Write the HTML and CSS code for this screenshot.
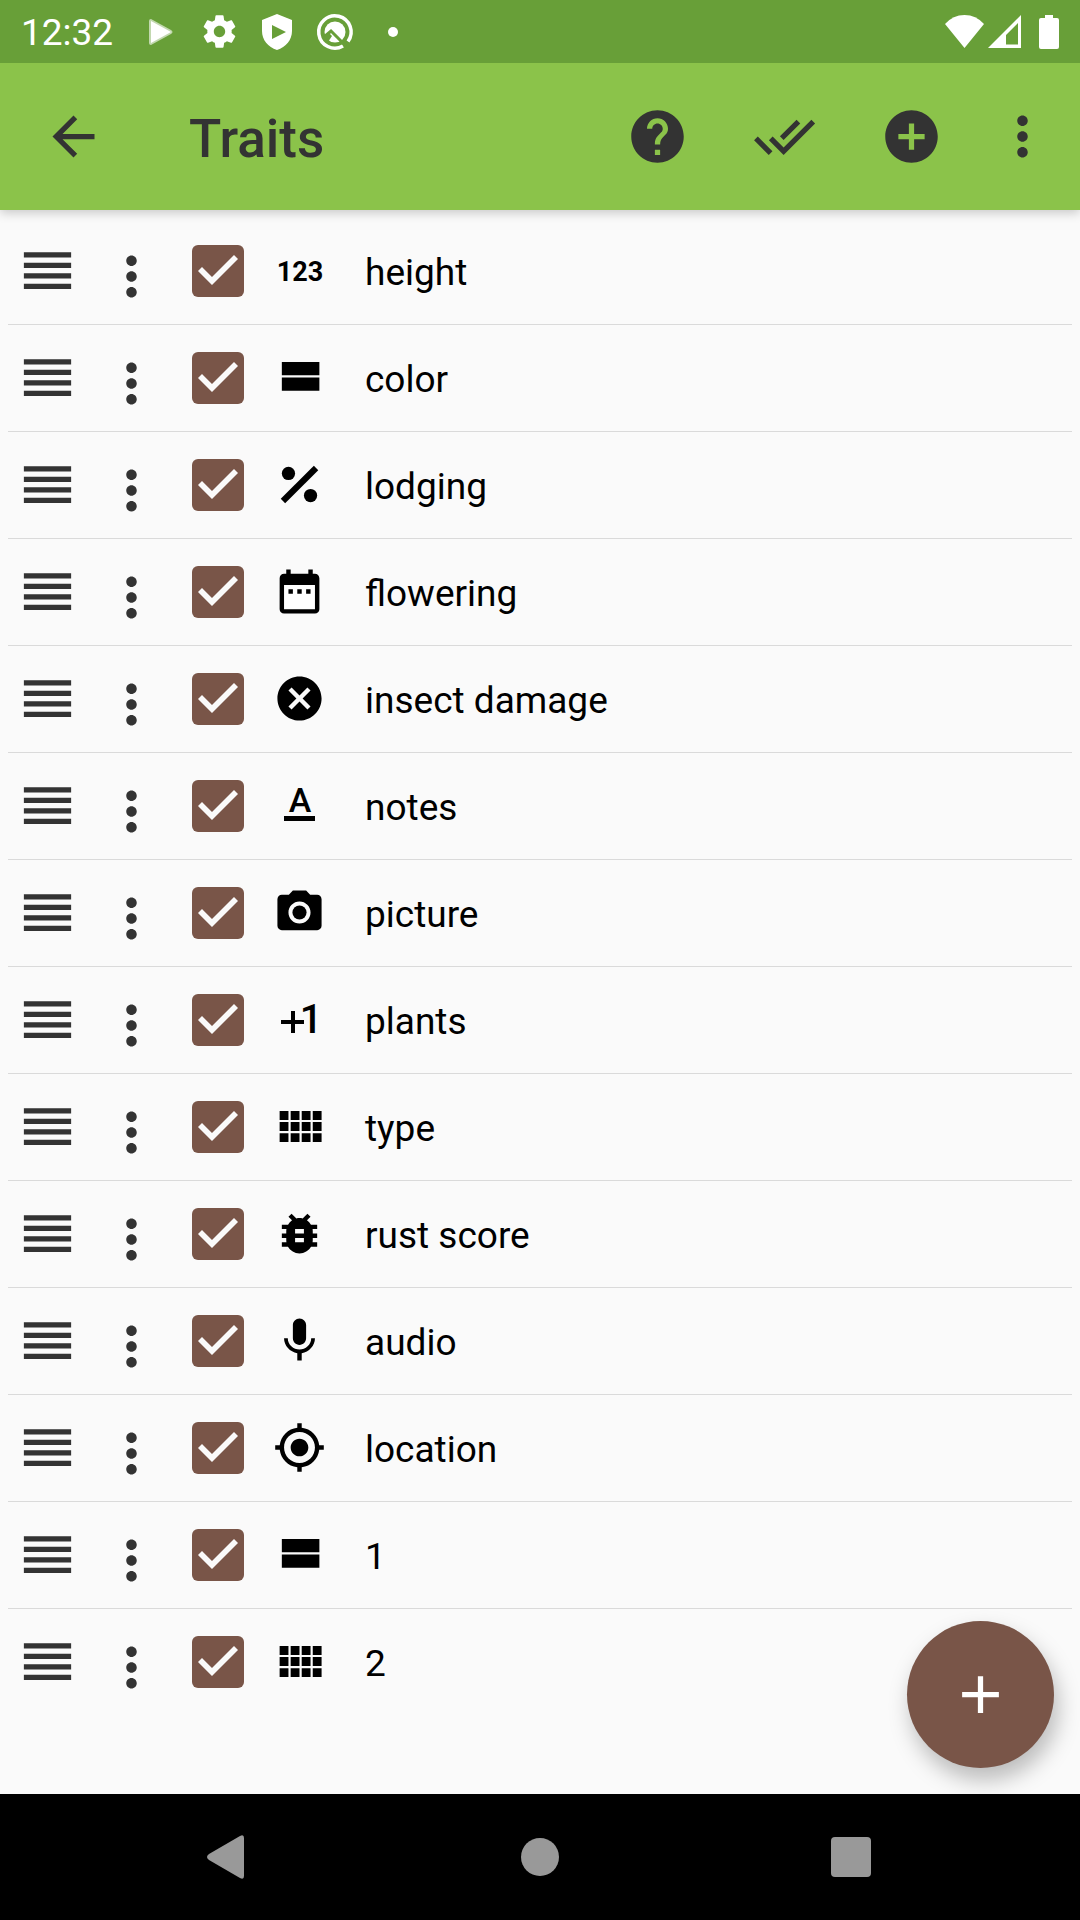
FILE: index.html
```html
<!DOCTYPE html>
<html lang="en">
<head>
<meta charset="utf-8">
<meta name="viewport" content="width=device-width, initial-scale=1">
<title>Traits</title>
<link rel="stylesheet" href="styles.css">
</head>
<body>
<svg class="sprite" aria-hidden="true">
  <symbol id="handle" viewBox="0 0 24 24"><path d="M3 15h18v-2H3v2zm0 4h18v-2H3v2zm0-8h18V9H3v2zm0-6v2h18V5H3z"/></symbol>
  <symbol id="more" viewBox="0 0 24 24"><path d="M12 8c1.1 0 2-.9 2-2s-.9-2-2-2-2 .9-2 2 .9 2 2 2zm0 2c-1.1 0-2 .9-2 2s.9 2 2 2 2-.9 2-2-.9-2-2-2zm0 6c-1.1 0-2 .9-2 2s.9 2 2 2 2-.9 2-2-.9-2-2-2z"/></symbol>
  <symbol id="categorical" viewBox="0 0 24 24"><path d="M4 18h17v-6H4v6zM4 5v6h17V5H4z"/></symbol>
  <symbol id="percent" viewBox="0 0 24 24"><path d="M18.5 3.5l-15 15 2 2 15-15z"/><circle cx="7" cy="7" r="3"/><circle cx="17" cy="17" r="3"/></symbol>
  <symbol id="date" viewBox="0 0 24 24"><path fill="#fff" d="M5 9h14v11H5z"/><path d="M19 4h-1V2h-2v2H8V2H6v2H5c-1.11 0-1.99.9-1.99 2L3 20c0 1.1.89 2 2 2h14c1.1 0 2-.9 2-2V6c0-1.1-.9-2-2-2zm0 16H5V9h14v11zM7 11h2v2H7zm4 0h2v2h-2zm4 0h2v2h-2z"/></symbol>
  <symbol id="boolean" viewBox="0 0 24 24"><path d="M12 2C6.47 2 2 6.47 2 12s4.47 10 10 10 10-4.47 10-10S17.530 2 12 2zm5 13.590L15.590 17 12 13.410 8.410 17 7 15.590 10.590 12 7 8.410 8.410 7 12 10.590 15.590 7 17 8.410 13.410 12 17 15.590z"/></symbol>
  <symbol id="photo" viewBox="0 0 24 24"><circle cx="12" cy="12" r="3.2"/><path d="M9 2L7.170 4H4c-1.100 0-2 .9-2 2v12c0 1.100.9 2 2 2h16c1.100 0 2-.9 2-2V6c0-1.100-.9-2-2-2h-3.170L15 2H9zm3 15c-2.760 0-5-2.240-5-5s2.240-5 5-5 5 2.240 5 5-2.240 5-5 5z"/></symbol>
  <symbol id="multicat" viewBox="0 0 24 24"><path d="M3 9h4V5H3v4zm0 5h4v-4H3v4zm5 0h4v-4H8v4zm5 0h4v-4h-4v4zM8 9h4V5H8v4zm5-4v4h4V5h-4zm5 9h4v-4h-4v4zM3 19h4v-4H3v4zm5 0h4v-4H8v4zm5 0h4v-4h-4v4zm5 0h4v-4h-4v4zm0-14v4h4V5h-4z"/></symbol>
  <symbol id="rust" viewBox="0 0 24 24"><path d="M20 8h-2.810c-.45-.78-1.070-1.450-1.820-1.960L17 4.410 15.590 3l-2.170 2.170C12.960 5.060 12.490 5 12 5c-.49 0-.96.06-1.410.17L8.410 3 7 4.410l1.620 1.630C7.880 6.550 7.260 7.220 6.810 8H4v2h2.090c-.05.33-.09.66-.09 1v1H4v2h2v1c0 .34.04.67.09 1H4v2h2.810c1.040 1.790 2.970 3 5.190 3s4.150-1.210 5.190-3H20v-2h-2.090c.05-.33.09-.66.09-1v-1h2v-2h-2v-1c0-.34-.04-.67-.09-1H20V8zm-6 8h-4v-2h4v2zm0-4h-4v-2h4v2z"/></symbol>
  <symbol id="audio" viewBox="0 0 24 24"><path d="M12 14c1.660 0 2.990-1.340 2.990-3L15 5c0-1.660-1.340-3-3-3S9 3.340 9 5v6c0 1.660 1.340 3 3 3zm5.300-3c0 3-2.540 5.100-5.300 5.100S6.700 14 6.700 11H5c0 3.410 2.720 6.230 6 6.720V21h2v-3.280c3.280-.48 6-3.300 6-6.720h-1.700z"/></symbol>
  <symbol id="location" viewBox="0 0 24 24"><path d="M12 8c-2.210 0-4 1.790-4 4s1.790 4 4 4 4-1.790 4-4-1.790-4-4-4zm8.940 3c-.46-4.170-3.770-7.480-7.940-7.940V1h-2v2.060C6.830 3.520 3.520 6.830 3.060 11H1v2h2.060c.46 4.170 3.770 7.480 7.940 7.940V23h2v-2.060c4.170-.46 7.480-3.770 7.940-7.940H23v-2h-2.060zM12 19c-3.870 0-7-3.130-7-7s3.130-7 7-7 7 3.130 7 7-3.130 7-7 7z"/></symbol>
</svg>

<div class="statusbar">
  <span class="clock">12:32</span>
  <span class="notices">
    <svg width="24" height="26" viewBox="0 0 24 26"><path opacity=".6" d="M2 0l20 11q3 2 0 4L2 26Q0 26 0 24V2Q0 0 2 0z"/><path d="M2 2l20 11L2 24z"/></svg>
    <svg width="39" height="39" viewBox="0 0 24 24"><path d="M19.430 12.980c.04-.32.07-.64.07-.98s-.03-.66-.07-.98l2.110-1.650c.19-.15.24-.42.12-.64l-2-3.460c-.12-.22-.39-.3-.61-.22l-2.490 1c-.52-.4-1.080-.73-1.690-.98l-.38-2.650C14.460 2.180 14.250 2 14 2h-4c-.25 0-.46.18-.49.42l-.38 2.650c-.61.25-1.170.59-1.690.98l-2.490-1c-.23-.09-.49 0-.61.22l-2 3.460c-.13.22-.07.49.12.64l2.110 1.650c-.04.32-.07.65-.07.98s.03.66.07.98l-2.110 1.650c-.19.15-.24.42-.12.64l2 3.460c.12.22.39.3.61.22l2.490-1c.52.4 1.080.73 1.690.98l.38 2.650c.03.24.24.42.49.42h4c.25 0 .46-.18.49-.42l.38-2.650c.61-.25 1.170-.59 1.690-.98l2.490 1c.23.09.49 0 .61-.22l2-3.460c.12-.22.07-.49-.12-.64l-2.110-1.650zM12 15.500c-1.930 0-3.500-1.570-3.500-3.500s1.570-3.500 3.500-3.500 3.500 1.570 3.500 3.500-1.570 3.500-3.500 3.500z"/></svg>
    <svg width="30" height="36" viewBox="0 0 30 36"><path fill-rule="evenodd" d="M15 0l15 6v11c0 9-6 16-15 19C6 33 0 26 0 17V6zM10 11v14l14-7z"/></svg>
    <svg width="36" height="36" viewBox="0 0 36 36"><path fill="none" stroke="#fff" stroke-width="3.500" d="M26 32A16.200 16.200 0 1 1 31 27.500"/><circle cx="18" cy="18" r="10.500"/><path fill="none" stroke="#689f38" stroke-width="3" d="M7 23l7-6 15 15"/><path fill="#689f38" d="M6 23l6-4 3 3-4 6z"/></svg>
    <svg width="10" height="10" viewBox="0 0 10 10"><circle cx="5" cy="5" r="5"/></svg>
  </span>
  <span class="system">
    <svg width="39" height="33" viewBox="0 0 39 33"><path d="M0 9Q8 0 19.500 0T39 9L19.500 33z"/></svg>
    <svg width="33" height="33" viewBox="0 0 33 33"><path fill-rule="evenodd" d="M33 0v33H0zM30 8L18 20v9.500h12z"/></svg>
    <svg class="battery" width="20" height="34" viewBox="0 0 20 34"><path d="M6 0h8v3h4q2 0 2 2v27q0 2-2 2H2q-2 0-2-2V5q0-2 2-2h4z"/></svg>
  </span>
</div>

<header class="appbar">
  <button class="bar-button back" aria-label="Back"><svg class="icon" viewBox="0 0 24 24"><path d="M20 11H7.830l5.590-5.590L12 4l-8 8 8 8 1.410-1.410L7.830 13H20v-2z"/></svg></button>
  <h1 class="title">Traits</h1>
  <button class="bar-button" aria-label="Help"><svg class="icon" viewBox="0 0 24 24"><path d="M12 2C6.480 2 2 6.480 2 12s4.480 10 10 10 10-4.480 10-10S17.520 2 12 2zm1 17h-2v-2h2v2zm2.070-7.750l-.9.920C13.450 12.900 13 13.500 13 15h-2v-.5c0-1.100.45-2.100 1.170-2.830l1.240-1.260c.37-.36.59-.86.59-1.410 0-1.100-.9-2-2-2s-2 .9-2 2H8c0-2.210 1.790-4 4-4s4 1.790 4 4c0 .88-.36 1.680-.93 2.250z"/></svg></button>
  <button class="bar-button" aria-label="Select all"><svg class="icon" viewBox="0 0 24 24"><path d="M18 7l-1.410-1.410-6.340 6.340 1.410 1.410L18 7zm4.240-1.410L11.660 16.170 7.480 12l-1.410 1.410L11.660 19l12-12-1.420-1.410zM.41 13.410L6 19l1.410-1.410L1.830 12 .41 13.410z"/></svg></button>
  <button class="bar-button" aria-label="Add trait"><svg class="icon" viewBox="0 0 24 24"><path d="M12 2C6.480 2 2 6.480 2 12s4.480 10 10 10 10-4.480 10-10S17.520 2 12 2zm5 11h-4v4h-2v-4H7v-2h4V7h2v4h4v2z"/></svg></button>
  <button class="bar-button overflow" aria-label="More options"><svg class="icon"><use href="#more"/></svg></button>
</header>

<main class="content">
  <ul class="traits">
    <li class="trait"><button class="tool" aria-label="Reorder"><svg class="icon"><use href="#handle"/></svg></button><button class="tool menu" aria-label="Trait menu"><svg class="icon"><use href="#more"/></svg></button><input class="check" type="checkbox" id="t1" checked><svg class="format" viewBox="0 0 53 53"><text class="glyph glyph-numeric" x="27" y="37">123</text></svg><label class="name" for="t1">height</label></li>
    <li class="trait"><button class="tool" aria-label="Reorder"><svg class="icon"><use href="#handle"/></svg></button><button class="tool menu" aria-label="Trait menu"><svg class="icon"><use href="#more"/></svg></button><input class="check" type="checkbox" id="t2" checked><svg class="format"><use href="#categorical"/></svg><label class="name" for="t2">color</label></li>
    <li class="trait"><button class="tool" aria-label="Reorder"><svg class="icon"><use href="#handle"/></svg></button><button class="tool menu" aria-label="Trait menu"><svg class="icon"><use href="#more"/></svg></button><input class="check" type="checkbox" id="t3" checked><svg class="format"><use href="#percent"/></svg><label class="name" for="t3">lodging</label></li>
    <li class="trait"><button class="tool" aria-label="Reorder"><svg class="icon"><use href="#handle"/></svg></button><button class="tool menu" aria-label="Trait menu"><svg class="icon"><use href="#more"/></svg></button><input class="check" type="checkbox" id="t4" checked><svg class="format"><use href="#date"/></svg><label class="name" for="t4">flowering</label></li>
    <li class="trait"><button class="tool" aria-label="Reorder"><svg class="icon"><use href="#handle"/></svg></button><button class="tool menu" aria-label="Trait menu"><svg class="icon"><use href="#more"/></svg></button><input class="check" type="checkbox" id="t5" checked><svg class="format"><use href="#boolean"/></svg><label class="name" for="t5">insect damage</label></li>
    <li class="trait"><button class="tool" aria-label="Reorder"><svg class="icon"><use href="#handle"/></svg></button><button class="tool menu" aria-label="Trait menu"><svg class="icon"><use href="#more"/></svg></button><input class="check" type="checkbox" id="t6" checked><svg class="format" viewBox="0 0 53 53"><text class="glyph glyph-text" x="27" y="33">A</text><path d="M11 37h31v5H11z"/></svg><label class="name" for="t6">notes</label></li>
    <li class="trait"><button class="tool" aria-label="Reorder"><svg class="icon"><use href="#handle"/></svg></button><button class="tool menu" aria-label="Trait menu"><svg class="icon"><use href="#more"/></svg></button><input class="check" type="checkbox" id="t7" checked><svg class="format"><use href="#photo"/></svg><label class="name" for="t7">picture</label></li>
    <li class="trait"><button class="tool" aria-label="Reorder"><svg class="icon"><use href="#handle"/></svg></button><button class="tool menu" aria-label="Trait menu"><svg class="icon"><use href="#more"/></svg></button><input class="check" type="checkbox" id="t8" checked><svg class="format" viewBox="0 0 53 53"><path d="M18 18h4v9h9v4h-9v9h-4v-9H8v-4h10z"/><text class="glyph glyph-counter" x="38" y="40">1</text></svg><label class="name" for="t8">plants</label></li>
    <li class="trait"><button class="tool" aria-label="Reorder"><svg class="icon"><use href="#handle"/></svg></button><button class="tool menu" aria-label="Trait menu"><svg class="icon"><use href="#more"/></svg></button><input class="check" type="checkbox" id="t9" checked><svg class="format"><use href="#multicat"/></svg><label class="name" for="t9">type</label></li>
    <li class="trait"><button class="tool" aria-label="Reorder"><svg class="icon"><use href="#handle"/></svg></button><button class="tool menu" aria-label="Trait menu"><svg class="icon"><use href="#more"/></svg></button><input class="check" type="checkbox" id="t10" checked><svg class="format"><use href="#rust"/></svg><label class="name" for="t10">rust score</label></li>
    <li class="trait"><button class="tool" aria-label="Reorder"><svg class="icon"><use href="#handle"/></svg></button><button class="tool menu" aria-label="Trait menu"><svg class="icon"><use href="#more"/></svg></button><input class="check" type="checkbox" id="t11" checked><svg class="format"><use href="#audio"/></svg><label class="name" for="t11">audio</label></li>
    <li class="trait"><button class="tool" aria-label="Reorder"><svg class="icon"><use href="#handle"/></svg></button><button class="tool menu" aria-label="Trait menu"><svg class="icon"><use href="#more"/></svg></button><input class="check" type="checkbox" id="t12" checked><svg class="format"><use href="#location"/></svg><label class="name" for="t12">location</label></li>
    <li class="trait"><button class="tool" aria-label="Reorder"><svg class="icon"><use href="#handle"/></svg></button><button class="tool menu" aria-label="Trait menu"><svg class="icon"><use href="#more"/></svg></button><input class="check" type="checkbox" id="t13" checked><svg class="format"><use href="#categorical"/></svg><label class="name" for="t13">1</label></li>
    <li class="trait"><button class="tool" aria-label="Reorder"><svg class="icon"><use href="#handle"/></svg></button><button class="tool menu" aria-label="Trait menu"><svg class="icon"><use href="#more"/></svg></button><input class="check" type="checkbox" id="t14" checked><svg class="format"><use href="#multicat"/></svg><label class="name" for="t14">2</label></li>
  </ul>
  <button class="fab" aria-label="New trait"><svg class="icon" viewBox="0 0 24 24"><path d="M19 13h-6v6h-2v-6H5v-2h6V5h2v6h6v2z"/></svg></button>
</main>

<nav class="navbar">
  <button class="nav-button" aria-label="Back"><svg width="42" height="42" viewBox="0 0 42 42"><path d="M32 0q4-2 4 2v38q0 4-4 2L1 24q-4-3 0-6z"/></svg></button>
  <button class="nav-button" aria-label="Home"><svg width="42" height="42" viewBox="0 0 42 42"><circle cx="21" cy="21" r="19"/></svg></button>
  <button class="nav-button" aria-label="Recent apps"><svg width="42" height="42" viewBox="0 0 42 42"><rect x="1" y="1" width="40" height="40" rx="4"/></svg></button>
</nav>
</body>
</html>
```
FILE: styles.css
```css
* {
  box-sizing: border-box;
}

body {
  display: flex;
  flex-direction: column;
  min-height: 100vh;
  margin: 0;
  background: #fafafa;
  color: #000;
  font-family: Roboto, "Noto Sans", sans-serif;
}

button {
  display: flex;
  align-items: center;
  justify-content: center;
  flex: none;
  margin: 0;
  padding: 0;
  border: 0;
  background: none;
  color: #333;
}

svg {
  display: block;
  flex: none;
  overflow: visible;
  fill: currentColor;
}

.sprite {
  position: absolute;
  width: 0;
  height: 0;
}

.icon {
  width: 63px;
  height: 63px;
}

/* Status bar */
.statusbar {
  position: relative;
  z-index: 1;
  display: flex;
  align-items: center;
  height: 63px;
  padding: 0 21px;
  background: #689f38;
  color: #fff;
}

.clock {
  width: 111px;
  padding-top: 3px;
  font-size: 37px;
  line-height: 44px;
}

.notices {
  display: grid;
  grid-template-columns: repeat(5, 58px);
  align-items: center;
  justify-items: center;
}

.system {
  display: flex;
  align-items: center;
  gap: 4px;
  margin-left: auto;
}

.battery {
  margin-left: 14px;
}

/* App bar */
.appbar {
  position: relative;
  display: flex;
  align-items: center;
  height: 147px;
  padding-right: 10px;
  background: #8bc34a;
  box-shadow: 0 3px 10px rgba(0, 0, 0, 0.2);
}

.bar-button {
  width: 127px;
  height: 126px;
}

.back {
  width: 147px;
}

.overflow {
  width: 95px;
}

.title {
  flex: 1;
  margin: 0;
  padding: 4px 0 0 42px;
  color: #333;
  font-size: 53px;
  font-weight: 500;
  line-height: 62px;
}

/* Trait list */
.content {
  position: relative;
  flex: 1;
}

.traits {
  margin: 0;
  padding: 8px;
  list-style: none;
}

.trait {
  display: flex;
  align-items: center;
  height: 107px;
  padding-left: 8px;
  border-bottom: 1px solid #dadada;
}

.trait:last-child {
  border-bottom-color: transparent;
}

.tool {
  padding-bottom: 1px;
}

.menu {
  margin-left: 21px;
  padding: 10px 0 0;
}

.check {
  appearance: none;
  flex: none;
  width: 52px;
  height: 52px;
  margin: 0 29px;
  border: 2px solid #795548;
  border-radius: 6px;
}

.check:checked {
  border: 0;
  background: #795548;
}

.check:checked::before {
  content: "";
  display: block;
  height: 52px;
  background: #fafafa;
  clip-path: polygon(20px 40px, 6px 26px, 10px 22px, 20px 32px, 42px 10px, 46px 14px);
}

.format {
  width: 53px;
  height: 53px;
  margin-bottom: 1px;
}

.glyph {
  font-weight: 500;
  text-anchor: middle;
}

.glyph-numeric {
  font-size: 27px;
  font-weight: 700;
}

.glyph-text {
  font-size: 34px;
}

.glyph-counter {
  font-size: 40px;
}

.name {
  flex: 1;
  padding: 4px 0 0 39px;
  font-size: 37px;
  line-height: 44px;
}

.fab {
  position: absolute;
  right: 26px;
  bottom: 26px;
  width: 147px;
  height: 147px;
  border-radius: 50%;
  background: #795548;
  box-shadow: 4px 12px 22px rgba(0, 0, 0, 0.26);
  color: #fff;
}

/* System navigation */
.navbar {
  position: relative;
  display: flex;
  align-items: center;
  justify-content: center;
  gap: 185px;
  height: 126px;
  background: #000;
}

.nav-button {
  width: 126px;
  height: 126px;
  color: #999;
}
```
